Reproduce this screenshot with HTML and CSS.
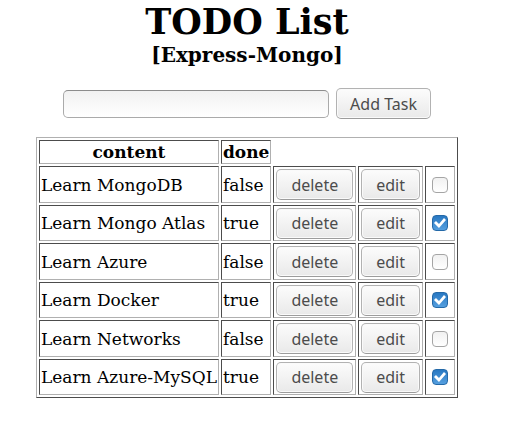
FILE: index.html
```html
<!DOCTYPE html>
<html lang="en">
<head>
<meta charset="utf-8">
<title>TODO List</title>
<link rel="stylesheet" href="styles.css">
</head>
<body>
<header>
  <h1 class="title">TODO List</h1>
  <h2 class="subtitle">[Express-Mongo]</h2>
</header>
<form class="add-form">
  <input class="task-input" type="text" aria-label="New task">
  <button class="button" type="button">Add Task</button>
</form>
<table class="tasks">
  <thead>
    <tr><th>content</th><th>done</th></tr>
  </thead>
  <tbody>
    <tr><td>Learn MongoDB</td><td>false</td><td class="action-cell"><button class="button" type="button">delete</button></td><td class="action-cell"><button class="button" type="button">edit</button></td><td class="check-cell"><input class="check" type="checkbox" aria-label="Learn MongoDB done"></td></tr>
    <tr><td>Learn Mongo Atlas</td><td>true</td><td class="action-cell"><button class="button" type="button">delete</button></td><td class="action-cell"><button class="button" type="button">edit</button></td><td class="check-cell"><input class="check" type="checkbox" aria-label="Learn Mongo Atlas done" checked></td></tr>
    <tr><td>Learn Azure</td><td>false</td><td class="action-cell"><button class="button" type="button">delete</button></td><td class="action-cell"><button class="button" type="button">edit</button></td><td class="check-cell"><input class="check" type="checkbox" aria-label="Learn Azure done"></td></tr>
    <tr><td>Learn Docker</td><td>true</td><td class="action-cell"><button class="button" type="button">delete</button></td><td class="action-cell"><button class="button" type="button">edit</button></td><td class="check-cell"><input class="check" type="checkbox" aria-label="Learn Docker done" checked></td></tr>
    <tr><td>Learn Networks</td><td>false</td><td class="action-cell"><button class="button" type="button">delete</button></td><td class="action-cell"><button class="button" type="button">edit</button></td><td class="check-cell"><input class="check" type="checkbox" aria-label="Learn Networks done"></td></tr>
    <tr><td>Learn Azure-MySQL</td><td>true</td><td class="action-cell"><button class="button" type="button">delete</button></td><td class="action-cell"><button class="button" type="button">edit</button></td><td class="check-cell"><input class="check" type="checkbox" aria-label="Learn Azure-MySQL done" checked></td></tr>
  </tbody>
</table>
</body>
</html>
```
FILE: styles.css
```css
* {
  box-sizing: border-box;
}

body {
  margin: 0;
  padding: 0 28px 0 0;
  background: #fff;
  color: #000;
  font: 17px/20px "DejaVu Serif", serif;
}

.title {
  margin: 0;
  font-size: 35px;
  line-height: 43px;
  text-align: center;
}

.subtitle {
  margin: 0;
  font-size: 20px;
  line-height: 24px;
  text-align: center;
}

.add-form {
  display: flex;
  justify-content: center;
  align-items: center;
  gap: 7px;
  margin: 21px 0 18px;
}

.task-input {
  width: 266px;
  height: 28px;
  padding: 2px 6px;
  border: 1px solid #aaa;
  border-top-color: #8c8c8c;
  border-radius: 5px;
  background: linear-gradient(#f1f1f1, #fff);
  font: inherit;
}

.button {
  display: block;
  height: 31px;
  padding: 0 13px;
  border: 1px solid #b2b2b2;
  border-bottom-color: #9c9c9c;
  border-radius: 5px;
  background: linear-gradient(#fcfcfc, #e9e9e9);
  box-shadow: inset 0 0 0 1px #fafafa;
  color: #4c4c4c;
  font: 16px/20px "Noto Sans", sans-serif;
}

.tasks {
  margin: 0 auto;
  border: 1px solid;
  border-color: #b0b0b0 #4c4c4c #4c4c4c #b0b0b0;
  border-spacing: 2px;
}

.tasks th,
.tasks td {
  padding: 1px;
  border: 1px solid;
  border-color: #4c4c4c #b0b0b0 #b0b0b0 #4c4c4c;
}

.tasks th {
  height: 24px;
}

.tasks tbody tr {
  height: 36px;
}

.tasks tbody tr:nth-child(odd) {
  height: 37px;
}

.tasks .action-cell {
  padding: 1px 2px;
}

.tasks .button {
  width: 100%;
  padding: 0 14px;
}

.tasks .check-cell {
  padding: 0 6px;
}

.check {
  appearance: none;
  display: block;
  width: 16px;
  height: 16px;
  margin: 0;
  border: 1px solid #a5a5a5;
  border-radius: 4px;
  background: linear-gradient(#f1f1f1, #fff);
}

.check:checked {
  border-color: #2469a8;
  background: linear-gradient(#2878c2, #559fdf);
}

.check:checked::before {
  content: "";
  display: block;
  width: 14px;
  height: 14px;
  background: #fff;
  clip-path: polygon(1px 7px, 3px 5px, 6px 8px, 11px 2px, 13px 4px, 6px 12px);
}
```
